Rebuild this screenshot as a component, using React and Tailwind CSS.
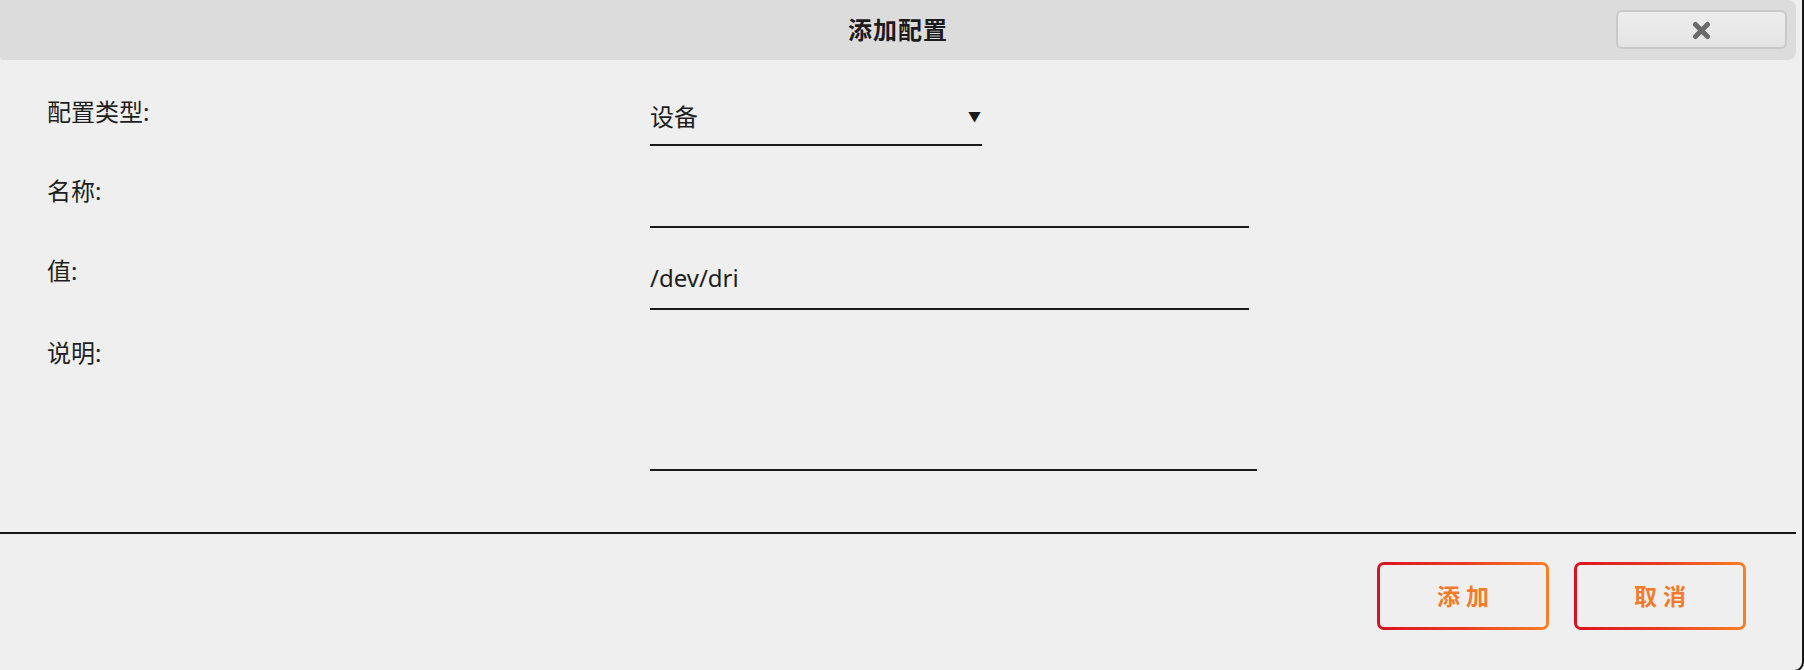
import React, { useState } from "react";

const font = "font-['Noto_Sans','Noto_Sans_CJK_SC',sans-serif]";

const Field = ({ label, children, rowClass, labelClass }) => (
  <div className={`flex items-start ${rowClass}`}>
    <div className={`w-[603px] shrink-0 text-[24px] leading-[32px] text-[#1e1e1e] ${labelClass}`}>
      {label}
    </div>
    {children}
  </div>
);

const GradientButton = ({ children, onClick }) => (
  <button
    onClick={onClick}
    className="w-[172px] h-[68px] p-[3px] rounded-[7px] bg-linear-to-r from-[#d90f22] via-[#e83a22] to-[#fc7f24]"
  >
    <div className="w-full h-full rounded-[4px] bg-[#efefef] flex items-center justify-center">
      <span className="text-[23px] font-bold tracking-[6px] pl-[6px] text-[#f57a2b]">{children}</span>
    </div>
  </button>
);

export default function App() {
  const [type, setType] = useState("设备");
  const [name, setName] = useState("");
  const [value, setValue] = useState("/dev/dri");
  const [desc, setDesc] = useState("");

  return (
    <div className={`w-[1804px] h-[670px] overflow-hidden bg-white ${font}`}>
      <div className="h-[672px] bg-[#efefef] border-r-2 border-b-2 border-[#161616] rounded-br-[10px] pr-[6px] flex flex-col">
        {/* Header */}
        <div className="h-[60px] shrink-0 bg-[#dcdcdc] rounded-r-[8px] rounded-bl-[3px] flex items-center relative">
          <h1 className="flex-1 text-center text-[24px] font-bold text-[#1c1c1c] tracking-[1px]">添加配置</h1>
          <button
            className="absolute right-[9px] top-[10px] w-[171px] h-[39px] rounded-[6px] border-2 border-[#c9c9c9] bg-linear-to-b from-[#ececec] via-[#e9e9e9] to-[#e3e3e3] flex items-center justify-center pt-[2px]"
            title="关闭"
          >
            <svg width="19" height="19" viewBox="0 0 19 19">
              <path d="M3.5 3.5 L15.5 15.5 M15.5 3.5 L3.5 15.5" stroke="#6a6a6a" strokeWidth="5" strokeLinecap="round" />
            </svg>
          </button>
        </div>

        {/* Form */}
        <div className="pl-[47px] pt-[36px] flex flex-col">
          <Field label="配置类型:">
            <div className="w-[332px] h-[50px] border-b-2 border-[#1a1a1a] flex items-center justify-between pb-[6px]">
              <span className="text-[24px] leading-[32px] text-[#1e1e1e]">{type}</span>
              <span className="text-[13px] text-[#1a1a1a] mr-[1px]">▼</span>
            </div>
          </Field>

          <Field label="名称:" rowClass="mt-[29px]">
            <input
              value={name}
              onChange={(e) => setName(e.target.value)}
              className="w-[599px] h-[53px] bg-transparent border-b-2 border-[#1a1a1a] outline-none text-[24px]"
            />
          </Field>

          <Field label="值:" rowClass="mt-[27px]">
            <input
              value={value}
              onChange={(e) => setValue(e.target.value)}
              className="w-[599px] h-[55px] bg-transparent border-b-2 border-[#1a1a1a] outline-none text-[24px] leading-[32px] text-[#1e1e1e] pb-[8px]"
            />
          </Field>

          <Field label="说明:" rowClass="mt-[27px]">
            <textarea
              value={desc}
              onChange={(e) => setDesc(e.target.value)}
              className="w-[607px] h-[134px] bg-transparent border-b-2 border-[#1a1a1a] outline-none resize-none text-[24px]"
            />
          </Field>
        </div>

        {/* Footer */}
        <div className="mt-[61px] h-[2px] bg-[#161616]" />
        <div className="flex justify-end gap-[25px] pt-[28px] pr-[50px]">
          <GradientButton onClick={() => setType("设备")}>添加</GradientButton>
          <GradientButton>取消</GradientButton>
        </div>
      </div>
    </div>
  );
}
